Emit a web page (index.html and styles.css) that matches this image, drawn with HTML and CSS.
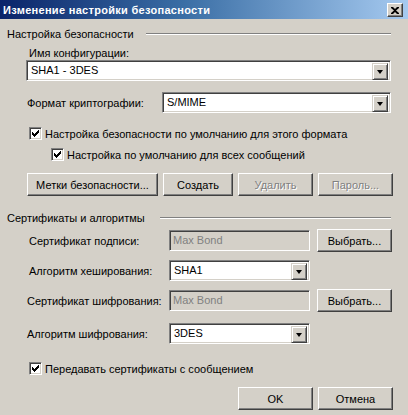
FILE: index.html
```html
<!DOCTYPE html>
<html>
<head>
<meta charset="utf-8">
<title>Изменение настройки безопасности</title>
<link rel="stylesheet" href="styles.css">
</head>
<body>
<div class="window">
  <div class="titlebar">
    <span class="title">Изменение настройки безопасности</span>
    <span class="close"><svg width="8" height="7" viewBox="0 0 8 7"><path d="M0 0h2l2 2 2-2h2v1L5 3.5 8 6v1H6L4 5 2 7H0V6l3-2.5L0 1z" fill="#000"/></svg></span>
  </div>
  <div class="content">
    <div class="group-head h1"><span>Настройка безопасности</span><span class="etch"></span></div>
    <div class="label l-name">Имя конфигурации:</div>
    <div class="combo combo-name"><span class="val">SHA1 - 3DES</span><span class="drop"><i></i></span></div>
    <div class="row row-format">
      <span class="label lab-format">Формат криптографии:</span>
      <div class="combo combo-format"><span class="val">S/MIME</span><span class="drop"><i></i></span></div>
    </div>
    <div class="check cb1"><span class="box"><svg width="7" height="7" viewBox="0 0 7 7"><path d="M0 2h1v1h1v1h1V3h1V2h1V1h1V0h1v3H6v1H5v1H4v1H3v1H2V6H1V5H0z" fill="#000"/></svg></span><span>Настройка безопасности по умолчанию для этого формата</span></div>
    <div class="check cb2"><span class="box"><svg width="7" height="7" viewBox="0 0 7 7"><path d="M0 2h1v1h1v1h1V3h1V2h1V1h1V0h1v3H6v1H5v1H4v1H3v1H2V6H1V5H0z" fill="#000"/></svg></span><span>Настройка по умолчанию для всех сообщений</span></div>
    <div class="btnrow">
      <span class="btn b-labels">Метки безопасности...</span>
      <span class="btn b-create">Создать</span>
      <span class="btn b-std disabled">Удалить</span>
      <span class="btn b-std disabled">Пароль...</span>
    </div>
    <div class="group-head h2"><span>Сертификаты и алгоритмы</span><span class="etch"></span></div>
    <div class="row row-sig">
      <span class="label lab-a">Сертификат подписи:</span>
      <span class="field">Max Bond</span>
      <span class="btn b-std">Выбрать...</span>
    </div>
    <div class="row row-hash">
      <span class="label lab-a">Алгоритм хеширования:</span>
      <div class="combo combo-small"><span class="val">SHA1</span><span class="drop"><i></i></span></div>
    </div>
    <div class="row row-enc">
      <span class="label lab-b">Сертификат шифрования:</span>
      <span class="field">Max Bond</span>
      <span class="btn b-std">Выбрать...</span>
    </div>
    <div class="row row-alg">
      <span class="label lab-b">Алгоритм шифрования:</span>
      <div class="combo combo-small"><span class="val">3DES</span><span class="drop"><i></i></span></div>
    </div>
    <div class="check cb3"><span class="box"><svg width="7" height="7" viewBox="0 0 7 7"><path d="M0 2h1v1h1v1h1V3h1V2h1V1h1V0h1v3H6v1H5v1H4v1H3v1H2V6H1V5H0z" fill="#000"/></svg></span><span>Передавать сертификаты с сообщением</span></div>
    <div class="footer">
      <span class="btn b-std">OK</span>
      <span class="btn b-std">Отмена</span>
    </div>
  </div>
</div>
</body>
</html>
```

FILE: styles.css
```css
* { box-sizing: border-box; }
html, body { margin: 0; padding: 0; background: #d4d0c8; }
body {
  width: 408px;
  height: 415px;
  overflow: hidden;
  font-family: "Liberation Sans", Arial, sans-serif;
  font-size: 11px;
  line-height: 14px;
  color: #000;
}
.window {
  width: 408px;
  height: 415px;
  display: flex;
  flex-direction: column;
  background: #d4d0c8;
}
.titlebar {
  height: 19px;
  flex: none;
  display: flex;
  align-items: center;
  justify-content: space-between;
  padding: 0 5px 0 3px;
  background: linear-gradient(to right, #0a246a 0%, #3a6ea5 45%, #a6caf0 100%);
}
.title {
  color: #fff;
  font-weight: bold;
  font-size: 11px;
  letter-spacing: 0.3px;
}
.close {
  width: 16px;
  height: 14px;
  background: #d4d0c8;
  border: 1px solid;
  border-color: #fff #404040 #404040 #fff;
  box-shadow: inset -1px -1px 0 #808080;
  display: flex;
  align-items: center;
  justify-content: center;
  margin-top: 1px;
}
.content {
  flex: 1;
  display: flex;
  flex-direction: column;
  padding: 0 15px 0 7px;
}
.group-head {
  display: flex;
  align-items: center;
  height: 14px;
  margin-right: 2px;
}
.group-head .etch {
  flex: 1;
  height: 2px;
  border-top: 1px solid #808080;
  border-bottom: 1px solid #fff;
  margin-left: 12px;
}
.h2 .etch { margin-left: 15px; }
.h1 { margin-top: 8px; }
.h2 { margin-top: 15px; }
.l-name { margin: 5px 0 0 22px; height: 14px; }
.label { white-space: nowrap; }
.combo {
  height: 21px;
  display: flex;
  background: #fff;
  border: 1px solid;
  border-color: #808080 #fff #fff #808080;
  box-shadow: inset 1px 1px 0 #404040, inset -1px -1px 0 #d4d0c8;
  padding: 2px;
}
.combo .val {
  flex: 1;
  padding-left: 2px;
  line-height: 15px;
  white-space: nowrap;
}
.combo .drop {
  width: 16px;
  height: 17px;
  background: #d4d0c8;
  border: 1px solid;
  border-color: #d4d0c8 #404040 #404040 #d4d0c8;
  box-shadow: inset 1px 1px 0 #fff, inset -1px -1px 0 #808080;
  display: flex;
  align-items: center;
  justify-content: center;
}
.combo .drop i {
  width: 0;
  height: 0;
  border-left: 3.5px solid transparent;
  border-right: 3.5px solid transparent;
  border-top: 4px solid #000;
  margin-top: 1px;
}
.combo-name { margin: 0 2px 0 19px; }
.row { display: flex; align-items: center; }
.row-format { margin-top: 11px; height: 21px; }
.lab-format { width: 155px; padding-left: 20px; }
.combo-format { flex: 1; margin-right: 2px; }
.check {
  display: flex;
  align-items: center;
  height: 17px;
  white-space: nowrap;
}
.check .box {
  width: 13px;
  height: 13px;
  background: #fff;
  border: 1px solid;
  border-color: #808080 #fff #fff #808080;
  box-shadow: inset 1px 1px 0 #404040, inset -1px -1px 0 #d4d0c8;
  display: flex;
  align-items: center;
  justify-content: center;
  margin-right: 3px;
  flex: none;
}
.cb1 { margin: 12px 0 0 22px; }
.cb2 { margin: 4px 0 0 44px; }
.cb3 { margin: 16px 0 0 22px; }
.btnrow {
  display: flex;
  gap: 5px;
  margin: 10px 0 0 20px;
}
.btn {
  height: 23px;
  display: flex;
  align-items: center;
  justify-content: center;
  background: #d4d0c8;
  border: 1px solid;
  border-color: #fff #404040 #404040 #fff;
  box-shadow: inset -1px -1px 0 #808080;
  white-space: nowrap;
  flex: none;
}
.btn.disabled {
  color: #808080;
  text-shadow: 1px 1px 0 #fff;
}
.b-labels { width: 131px; }
.b-create { width: 70px; }
.b-std { width: 75px; }
.row-sig { margin-top: 4px; height: 23px; }
.row-hash { margin-top: 8px; height: 21px; }
.row-enc { margin-top: 8px; height: 23px; }
.row-alg { margin-top: 11px; height: 21px; }
.lab-a { width: 162px; padding-left: 22px; }
.lab-b { width: 162px; padding-left: 20px; }
.field {
  width: 141px;
  height: 21px;
  border: 1px solid;
  border-color: #808080 #fff #fff #808080;
  box-shadow: inset 1px 1px 0 #404040, inset -1px -1px 0 #d4d0c8;
  padding: 2px 3px;
  line-height: 15px;
  color: #808080;
  margin-right: 7px;
}
.combo-small { width: 141px; }
.footer {
  display: flex;
  justify-content: flex-end;
  gap: 5px;
  margin-top: 10px;
}
```
